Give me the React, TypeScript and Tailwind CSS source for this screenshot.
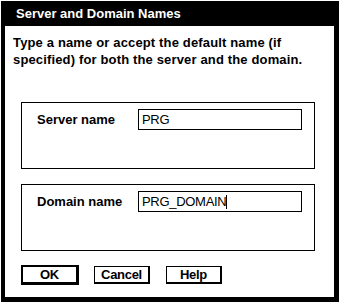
import React from "react";

const font = { fontFamily: '"Liberation Sans", Arial, sans-serif' };

function Field({ label, value, cursor }: { label: string; value: string; cursor?: boolean }) {
  return (
    <div className="ml-[16px] w-[294px] h-[67px] border border-black pt-[6px] pl-[15px]">
      <div className="flex items-center">
        <div className="w-[101px] text-[13px] font-bold leading-none text-black">{label}</div>
        <div className="w-[164px] h-[21px] border border-black flex items-center pl-[3px] text-[13px] tracking-[-0.3px] leading-none text-black">
          <span>{value}</span>
          {cursor && <span className="inline-block w-[1px] h-[14px] bg-black" />}
        </div>
      </div>
    </div>
  );
}

export default function App() {
  return (
    <div className="w-[340px] h-[303px] bg-white pt-[1px] pl-[1px] select-none" style={font}>
      <div className="w-[338px] h-[301px] flex flex-col">
        <div className="h-[25px] bg-black flex items-center pl-[15px] text-white text-[13px] font-bold leading-none">
          Server and Domain Names
        </div>
        <div className="flex-1 flex flex-col border-l-4 border-r-[5px] border-b-[5px] border-black">
          <div className="pt-[8px] pl-[8px] text-[13px] tracking-[0.15px] font-bold leading-[17px] text-black">
            <div>Type a name or accept the default name (if</div>
            <div>specified) for both the server and the domain.</div>
          </div>
          <div className="mt-[34px]">
            <Field label="Server name" value="PRG" />
          </div>
          <div className="mt-[15px]">
            <Field label="Domain name" value="PRG_DOMAIN" cursor />
          </div>
          <div className="mt-[14px] ml-[16px] flex items-center text-[13px] tracking-[-0.3px] font-bold leading-none text-black">
            <div className="w-[58px] h-[20px] border-2 border-r-[3px] border-b-[3px] border-black flex items-center justify-center">
              OK
            </div>
            <div className="ml-[15px] w-[56px] h-[18px] border border-r-2 border-b-2 border-black flex items-center justify-center">
              Cancel
            </div>
            <div className="ml-[16px] w-[56px] h-[18px] border border-r-2 border-b-2 border-black flex items-center justify-center">
              Help
            </div>
          </div>
        </div>
      </div>
    </div>
  );
}
